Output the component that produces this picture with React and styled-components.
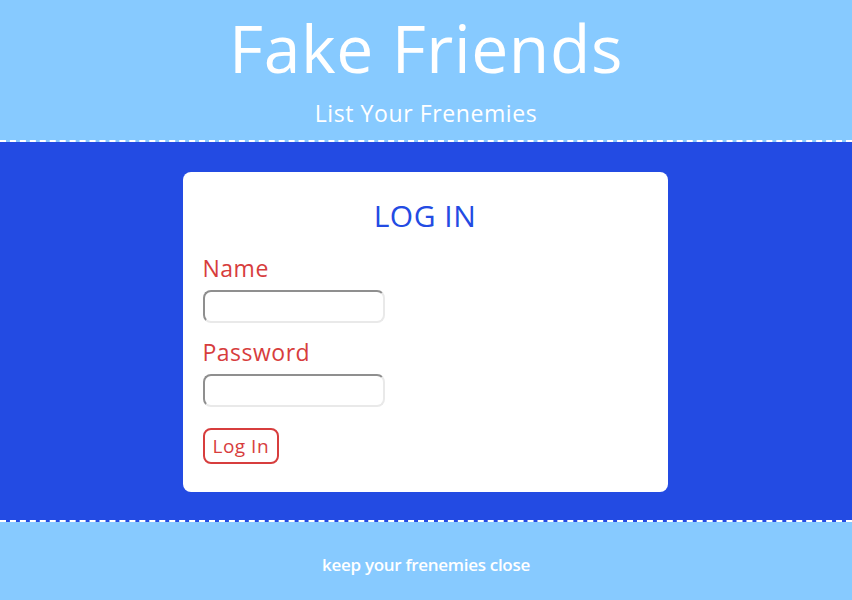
import React from "react"
import styled, { createGlobalStyle } from "styled-components"

const colorSky = "#87caff"
const colorBlue = "#234be3"
const colorRed = "#d73d3d"

const GlobalStyle = createGlobalStyle`
  body {
    margin: 0;
    font-family: "Open Sans", "Liberation Sans", sans-serif;
    background: ${colorSky};
  }
`

const Header = styled.header`
  background: ${colorSky};
  color: #ffffff;
  text-align: center;
  height: 142px;
  box-sizing: border-box;
  padding-top: 6px;
  border-bottom: 2px dashed #ffffff;
`

const Title = styled.h1`
  margin: 0;
  font-size: 66px;
  font-weight: 500;
  line-height: 82px;
  letter-spacing: 0.6px;
`

const Subtitle = styled.h2`
  margin: 10px 0 0;
  font-size: 23px;
  font-weight: 500;
  line-height: 30px;
  letter-spacing: 0.6px;
`

const Main = styled.main`
  background: ${colorBlue};
  padding: 30px 0 28px;
  border-bottom: 2px dashed #ffffff;
  display: flex;
  justify-content: center;
`

const Card = styled.section`
  background: #ffffff;
  width: 485px;
  height: 320px;
  box-sizing: border-box;
  border-radius: 8px;
  padding: 24px 20px;
  display: flex;
  flex-direction: column;
  align-items: flex-start;
  transform: translateX(-1px);
`

const CardTitle = styled.h3`
  align-self: stretch;
  margin: 0 0 17px;
  text-align: center;
  color: ${colorBlue};
  font-size: 30px;
  font-weight: 400;
  line-height: 40px;
  letter-spacing: 0.5px;
`

const Label = styled.label`
  color: ${colorRed};
  font-size: 23px;
  line-height: 30px;
  letter-spacing: 0.5px;
  margin-bottom: 7px;
`

const Input = styled.input`
  width: 182px;
  height: 33px;
  box-sizing: border-box;
  border: 2px solid #e9e9e9;
  border-top-color: #8f8f8f;
  border-left-color: #8f8f8f;
  border-radius: 8px;
  margin: 0 0 14px;
  background: #ffffff;
`

const Button = styled.button`
  margin-top: 7px;
  background: #ffffff;
  color: ${colorRed};
  border: 2px solid ${colorRed};
  border-radius: 8px;
  font-family: inherit;
  font-size: 19px;
  letter-spacing: 0.5px;
  padding: 3px 8px;
  line-height: 26px;
`

const Footer = styled.footer`
  background: ${colorSky};
  color: #ffffff;
  text-align: center;
  height: 78px;
  box-sizing: border-box;
  padding-top: 6px;
  display: flex;
  align-items: center;
  justify-content: center;
  font-size: 17px;
  letter-spacing: -0.3px;
  font-weight: 600;
`

const App = () => {
  return (
    <>
      <GlobalStyle />
      <Header>
        <Title>Fake Friends</Title>
        <Subtitle>List Your Frenemies</Subtitle>
      </Header>
      <Main>
        <Card>
          <CardTitle>LOG IN</CardTitle>
          <Label htmlFor="name">Name</Label>
          <Input id="name" type="text" />
          <Label htmlFor="password">Password</Label>
          <Input id="password" type="password" />
          <Button>Log In</Button>
        </Card>
      </Main>
      <Footer>keep your frenemies close</Footer>
    </>
  )
}

export default App
